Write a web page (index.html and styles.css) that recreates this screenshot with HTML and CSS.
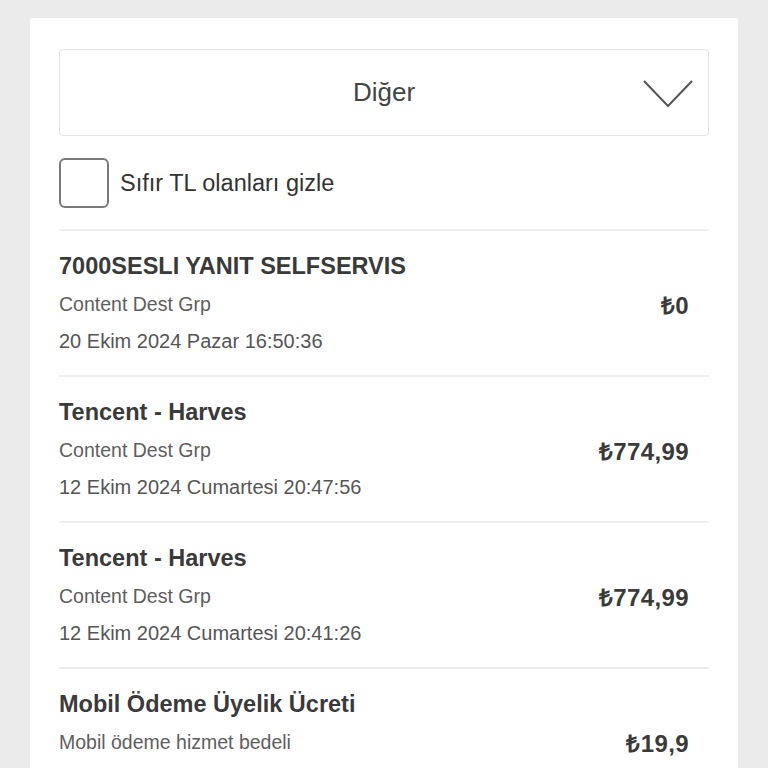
FILE: index.html
```html
<!DOCTYPE html>
<html lang="tr">
<head>
<meta charset="utf-8">
<link rel="stylesheet" href="styles.css">
</head>
<body>
<div class="card">
  <div class="select">
    <span class="select-label">Diğer</span>
    <svg class="chevron" width="52" height="30" viewBox="0 0 52 30"><polyline points="2,2 26,27 50,2" fill="none" stroke="#555" stroke-width="2"/></svg>
  </div>
  <label class="check-row">
    <span class="checkbox"></span>
    <span class="check-text">Sıfır TL olanları gizle</span>
  </label>
  <div class="list">
    <div class="item">
      <div class="title">7000SESLI YANIT SELFSERVIS</div>
      <div class="sub">Content Dest Grp</div>
      <div class="date">20 Ekim 2024 Pazar 16:50:36</div>
      <div class="amount">₺0</div>
    </div>
    <div class="item">
      <div class="title">Tencent - Harves</div>
      <div class="sub">Content Dest Grp</div>
      <div class="date">12 Ekim 2024 Cumartesi 20:47:56</div>
      <div class="amount">₺774,99</div>
    </div>
    <div class="item">
      <div class="title">Tencent - Harves</div>
      <div class="sub">Content Dest Grp</div>
      <div class="date">12 Ekim 2024 Cumartesi 20:41:26</div>
      <div class="amount">₺774,99</div>
    </div>
    <div class="item">
      <div class="title">Mobil Ödeme Üyelik Ücreti</div>
      <div class="sub">Mobil ödeme hizmet bedeli</div>
      <div class="amount">₺19,9</div>
    </div>
  </div>
</div>
</body>
</html>
```
FILE: styles.css
```css
html, body {
  margin: 0;
  padding: 0;
  background: #ebebeb;
  font-family: "Liberation Sans", Arial, sans-serif;
  color: #333;
}
body {
  height: 768px;
  overflow: hidden;
}
.card {
  margin: 18px 30px 0;
  background: #fff;
  border-radius: 4px;
  padding: 31px 29px 0;
  min-height: 800px;
}
.select {
  height: 85px;
  border: 1px solid #e4e4e4;
  border-radius: 4px;
  display: flex;
  align-items: center;
  justify-content: center;
  position: relative;
}
.select-label {
  font-size: 26px;
  color: #444;
}
.chevron {
  position: absolute;
  right: 14px;
  top: 29px;
}
.check-row {
  display: flex;
  align-items: center;
  gap: 11px;
  margin-top: 22px;
  padding-bottom: 21px;
  border-bottom: 2px solid #ededed;
}
.checkbox {
  width: 46px;
  height: 46px;
  border: 2px solid #7a7a7a;
  border-radius: 6px;
  box-sizing: content-box;
  flex: none;
}
.check-text {
  font-size: 23.5px;
  color: #333;
}
.item {
  display: grid;
  grid-template-columns: 1fr auto;
  padding: 16px 20px 15px 0;
  border-bottom: 2px solid #ededed;
}
.title {
  grid-column: 1;
  font-size: 23.5px;
  font-weight: bold;
  line-height: 39px;
  color: #3a3a3a;
}
.sub {
  grid-column: 1;
  font-size: 19.5px;
  line-height: 37px;
  color: #5e5e5e;
}
.date {
  grid-column: 1;
  font-size: 20px;
  line-height: 37px;
  color: #555;
}
.amount {
  grid-column: 2;
  grid-row: 2;
  align-self: center;
  font-size: 24px;
  font-weight: bold;
  color: #3a3a3a;
  letter-spacing: 0.4px;
}
```
